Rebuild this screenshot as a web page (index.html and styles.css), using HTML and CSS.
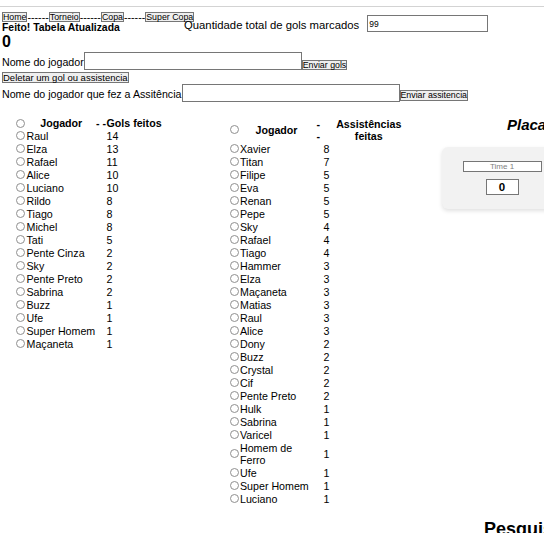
FILE: index.html
```html
<!DOCTYPE html>
<html lang="pt">
<head>
<meta charset="utf-8">
<title>Tabela</title>
<link rel="stylesheet" href="styles.css">
</head>
<body>
<div class="topline"></div>
<div class="top">
  <div class="top-left">
    <div class="nav"><button class="btn">Home</button><span class="dash">------</span><button class="btn">Torneio</button><span class="dash">------</span><button class="btn">Copa</button><span class="dash">------</span><button class="btn">Super Copa</button></div>
    <h4 class="status">Feito! Tabela Atualizada</h4>
    <h2 class="total">0</h2>
  </div>
  <div class="top-right">
    <label class="qlabel">Quantidade total de gols marcados</label>
    <input class="qinput" value="99">
  </div>
</div>
<div class="form-row row1">
  <label class="flabel">Nome do jogador</label><input class="field"><button class="btn fbtn">Enviar gols</button>
</div>
<button class="btn del">Deletar um gol ou assistencia</button>
<div class="form-row row2">
  <label class="flabel">Nome do jogador que fez a Assitência</label><input class="field"><button class="btn fbtn fbtn2">Enviar assitencia</button>
</div>
<div class="boards">
  <table class="tbl tbl-left">
    <colgroup><col class="lc1"><col class="lc2"><col class="lc3"><col class="lc4"></colgroup>
    <thead>
      <tr><th><span class="radio"></span></th><th>Jogador</th><th class="dashcell">- -</th><th class="title-l">Gols feitos</th></tr>
    </thead>
    <tbody>
      <tr><td><span class="radio"></span></td><td>Raul</td><td class="num" colspan="2">14</td></tr>
      <tr><td><span class="radio"></span></td><td>Elza</td><td class="num" colspan="2">13</td></tr>
      <tr><td><span class="radio"></span></td><td>Rafael</td><td class="num" colspan="2">11</td></tr>
      <tr><td><span class="radio"></span></td><td>Alice</td><td class="num" colspan="2">10</td></tr>
      <tr><td><span class="radio"></span></td><td>Luciano</td><td class="num" colspan="2">10</td></tr>
      <tr><td><span class="radio"></span></td><td>Rildo</td><td class="num" colspan="2">8</td></tr>
      <tr><td><span class="radio"></span></td><td>Tiago</td><td class="num" colspan="2">8</td></tr>
      <tr><td><span class="radio"></span></td><td>Michel</td><td class="num" colspan="2">8</td></tr>
      <tr><td><span class="radio"></span></td><td>Tati</td><td class="num" colspan="2">5</td></tr>
      <tr><td><span class="radio"></span></td><td>Pente Cinza</td><td class="num" colspan="2">2</td></tr>
      <tr><td><span class="radio"></span></td><td>Sky</td><td class="num" colspan="2">2</td></tr>
      <tr><td><span class="radio"></span></td><td>Pente Preto</td><td class="num" colspan="2">2</td></tr>
      <tr><td><span class="radio"></span></td><td>Sabrina</td><td class="num" colspan="2">2</td></tr>
      <tr><td><span class="radio"></span></td><td>Buzz</td><td class="num" colspan="2">1</td></tr>
      <tr><td><span class="radio"></span></td><td>Ufe</td><td class="num" colspan="2">1</td></tr>
      <tr><td><span class="radio"></span></td><td>Super Homem</td><td class="num" colspan="2">1</td></tr>
      <tr><td><span class="radio"></span></td><td>Maçaneta</td><td class="num" colspan="2">1</td></tr>
    </tbody>
  </table>
  <table class="tbl tbl-right">
    <colgroup><col class="rc1"><col class="rc2"><col class="rc3"><col class="rc4"></colgroup>
    <thead>
      <tr><th><span class="radio"></span></th><th>Jogador</th><th class="dashwrap">- -</th><th class="title-r">Assistências feitas</th></tr>
    </thead>
    <tbody>
      <tr><td><span class="radio"></span></td><td>Xavier</td><td class="num" colspan="2">8</td></tr>
      <tr><td><span class="radio"></span></td><td>Titan</td><td class="num" colspan="2">7</td></tr>
      <tr><td><span class="radio"></span></td><td>Filipe</td><td class="num" colspan="2">5</td></tr>
      <tr><td><span class="radio"></span></td><td>Eva</td><td class="num" colspan="2">5</td></tr>
      <tr><td><span class="radio"></span></td><td>Renan</td><td class="num" colspan="2">5</td></tr>
      <tr><td><span class="radio"></span></td><td>Pepe</td><td class="num" colspan="2">5</td></tr>
      <tr><td><span class="radio"></span></td><td>Sky</td><td class="num" colspan="2">4</td></tr>
      <tr><td><span class="radio"></span></td><td>Rafael</td><td class="num" colspan="2">4</td></tr>
      <tr><td><span class="radio"></span></td><td>Tiago</td><td class="num" colspan="2">4</td></tr>
      <tr><td><span class="radio"></span></td><td>Hammer</td><td class="num" colspan="2">3</td></tr>
      <tr><td><span class="radio"></span></td><td>Elza</td><td class="num" colspan="2">3</td></tr>
      <tr><td><span class="radio"></span></td><td>Maçaneta</td><td class="num" colspan="2">3</td></tr>
      <tr><td><span class="radio"></span></td><td>Matias</td><td class="num" colspan="2">3</td></tr>
      <tr><td><span class="radio"></span></td><td>Raul</td><td class="num" colspan="2">3</td></tr>
      <tr><td><span class="radio"></span></td><td>Alice</td><td class="num" colspan="2">3</td></tr>
      <tr><td><span class="radio"></span></td><td>Dony</td><td class="num" colspan="2">2</td></tr>
      <tr><td><span class="radio"></span></td><td>Buzz</td><td class="num" colspan="2">2</td></tr>
      <tr><td><span class="radio"></span></td><td>Crystal</td><td class="num" colspan="2">2</td></tr>
      <tr><td><span class="radio"></span></td><td>Cif</td><td class="num" colspan="2">2</td></tr>
      <tr><td><span class="radio"></span></td><td>Pente Preto</td><td class="num" colspan="2">2</td></tr>
      <tr><td><span class="radio"></span></td><td>Hulk</td><td class="num" colspan="2">1</td></tr>
      <tr><td><span class="radio"></span></td><td>Sabrina</td><td class="num" colspan="2">1</td></tr>
      <tr><td><span class="radio"></span></td><td>Varicel</td><td class="num" colspan="2">1</td></tr>
      <tr><td><span class="radio"></span></td><td>Homem de Ferro</td><td class="num" colspan="2">1</td></tr>
      <tr><td><span class="radio"></span></td><td>Ufe</td><td class="num" colspan="2">1</td></tr>
      <tr><td><span class="radio"></span></td><td>Super Homem</td><td class="num" colspan="2">1</td></tr>
      <tr><td><span class="radio"></span></td><td>Luciano</td><td class="num" colspan="2">1</td></tr>
    </tbody>
  </table>
  <div class="scores">
    <h2 class="placar-title">Placar</h2>
    <div class="card">
      <input class="team" placeholder="Time 1">
      <input class="score" value="0">
    </div>
    <h2 class="pesquisa">Pesquisa</h2>
  </div>
</div>
</body>
</html>
```
FILE: styles.css
```css
html, body {
  margin: 0;
  overflow: hidden;
}
body {
  width: 544px;
  height: 533px;
  font-family: "Liberation Sans", Arial, sans-serif;
  font-size: 10.67px;
  line-height: 12px;
  color: #000;
  background: #fff;
}
.topline {
  height: 1px;
  margin-top: 6px;
  background: #d3d3d3;
}
.btn {
  font-family: "Liberation Sans", Arial, sans-serif;
  font-size: 8.8px;
  line-height: 8px;
  padding: 0;
  margin: 0;
  border: 1px solid #767676;
  border-radius: 0;
  background: #efefef;
  color: #000;
}
.top {
  display: flex;
  padding-left: 2px;
  margin-top: 4px;
}
.top-left {
  width: 182px;
  flex: none;
}
.nav {
  display: flex;
  align-items: center;
  height: 11px;
  white-space: nowrap;
}
.dash {
  font-size: 10.67px;
}
.status {
  margin: 0;
  font-size: 10.4px;
  line-height: 12px;
  font-weight: bold;
}
.total {
  margin: 1px 0 0;
  font-size: 16px;
  line-height: 14px;
  font-weight: bold;
}
.top-right {
  display: flex;
  align-items: flex-end;
  gap: 8px;
  height: 17px;
  margin-top: 4px;
  flex: none;
}
.qlabel {
  font-size: 11.3px;
  line-height: 13px;
  white-space: nowrap;
}
.qinput {
  width: 121px;
  height: 17px;
  box-sizing: border-box;
  margin: 0;
  padding: 0 1px;
  border: 1px solid #767676;
  font-family: "Liberation Sans", Arial, sans-serif;
  font-size: 8.5px;
}
.form-row {
  display: flex;
  align-items: flex-end;
  padding-left: 2px;
  white-space: nowrap;
}
.row1 {
  margin-top: 3px;
}
.row2 {
  margin-top: 1px;
}
.flabel {
  margin-bottom: 2px;
}
.field {
  width: 218px;
  height: 18px;
  box-sizing: border-box;
  margin: 0;
  padding: 0 1px;
  border: 1px solid #767676;
}
.fbtn2 {
  line-height: 9px;
  margin-bottom: 1px;
}
.del {
  display: block;
  margin: 2px 0 0 2px;
  font-size: 9.5px;
  line-height: 9px;
}
.boards {
  display: flex;
  align-items: flex-start;
  margin-top: 15px;
}
.tbl {
  flex: none;
  border-collapse: collapse;
  table-layout: fixed;
}
.tbl td, .tbl th {
  padding: 0.5px 0;
  line-height: 12px;
  font-size: 10.67px;
  text-align: left;
  vertical-align: middle;
}
.tbl th {
  font-weight: bold;
  text-align: center;
}
.radio {
  display: block;
  width: 9px;
  height: 9px;
  margin-left: 3px;
  box-sizing: border-box;
  border: 1px solid #8f8f8f;
  border-radius: 50%;
  background: #fff;
}
.tbl-left {
  margin-left: 13px;
  width: 150.5px;
}
.tbl-left td {
  white-space: nowrap;
}
.tbl-left thead th {
  padding: 0;
}
.lc1 { width: 13.5px; }
.lc2 { width: 69.5px; }
.lc3 { width: 10.5px; }
.lc4 { width: 57px; }
.tbl .dashcell {
  text-align: right;
  padding-right: 1.5px;
  white-space: nowrap;
}
.tbl .title-l {
  text-align: left;
  white-space: nowrap;
}
.tbl .num {
  padding-left: 10.5px;
}
.tbl-right {
  margin-left: 63.5px;
  width: 176px;
}
.rc1 { width: 13px; }
.rc2 { width: 73px; }
.rc3 { width: 10.5px; }
.rc4 { width: 79.5px; }
.tbl .dashwrap {
  padding: 0.5px 3px;
}
.tbl .title-r {
  padding-left: 11px;
}
.scores {
  flex: none;
  width: 200px;
  margin-left: 39px;
}
.placar-title {
  margin: -1px 0 0;
  padding-left: 65px;
  font-size: 15px;
  line-height: 17px;
  font-style: italic;
  font-weight: bold;
  white-space: nowrap;
}
.card {
  width: 120px;
  margin-top: 14px;
  padding: 14px 0;
  display: flex;
  flex-direction: column;
  align-items: center;
  gap: 7px;
  background: #f2f2f2;
  border-radius: 6px;
  box-shadow: 0 2px 4px rgba(0, 0, 0, 0.12);
}
.team {
  width: 79px;
  height: 11px;
  box-sizing: border-box;
  margin: 0;
  padding: 0;
  border: 1px solid #767676;
  background: #fff;
  font-family: "Liberation Sans", Arial, sans-serif;
  font-size: 8px;
  text-align: center;
}
.team::placeholder {
  color: #808080;
}
.score {
  width: 33px;
  height: 16px;
  box-sizing: border-box;
  margin: 0;
  padding: 0;
  border: 1px solid #767676;
  background: #fff;
  font-family: "Liberation Sans", Arial, sans-serif;
  font-size: 11.5px;
  font-weight: bold;
  text-align: center;
}
.pesquisa {
  margin: 310px 0 0 42px;
  font-size: 18px;
  line-height: 21px;
  font-weight: bold;
  white-space: nowrap;
}
```
